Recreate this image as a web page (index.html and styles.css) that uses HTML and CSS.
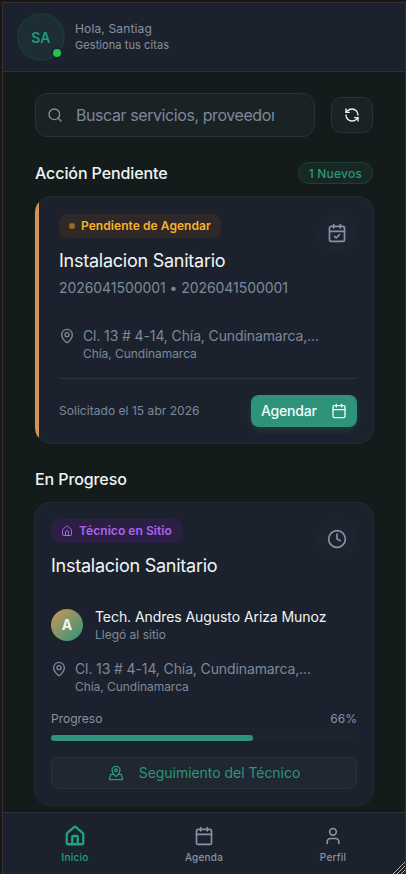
FILE: index.html
```html
<!DOCTYPE html>
<html lang="es">
<head>
<meta charset="utf-8">
<meta name="viewport" content="width=device-width, initial-scale=1">
<title>Inicio</title>
<link rel="stylesheet" href="styles.css">
</head>
<body>
<svg class="sprite" aria-hidden="true">
  <symbol id="pin" viewBox="0 0 24 24"><path d="M20 10c0 5-5.5 10.2-7.4 11.8a1 1 0 0 1-1.2 0C9.500 20.200 4 15 4 10a8 8 0 0 1 16 0"/><circle cx="12" cy="10" r="3"/></symbol>
  <symbol id="calendar" viewBox="0 0 24 24"><path d="M8 2v4M16 2v4M3 10h18"/><rect x="3" y="4" width="18" height="18" rx="2"/></symbol>
  <symbol id="house" viewBox="0 0 24 24"><path d="M15 21v-8a1 1 0 0 0-1-1h-4a1 1 0 0 0-1 1v8"/><path d="M3 10a2 2 0 0 1 .7-1.500l7-6a2 2 0 0 1 2.600 0l7 6A2 2 0 0 1 21 10v9a2 2 0 0 1-2 2H5a2 2 0 0 1-2-2z"/></symbol>
</svg>
<div class="app">
  <header class="header">
    <div class="avatar">SA<span class="online"></span></div>
    <div>
      <div class="hello">Hola, Santiag</div>
      <div class="tagline">Gestiona tus citas</div>
    </div>
  </header>

  <main class="content">
    <div class="search-row">
      <label class="search">
        <svg class="icon" viewBox="0 0 24 24"><circle cx="11" cy="11" r="8"/><path d="m21 21-4.300-4.300"/></svg>
        <span class="search-text">Buscar servicios, proveedores</span>
      </label>
      <button class="refresh" aria-label="Actualizar">
        <svg class="icon" viewBox="0 0 24 24"><path d="M21 12a9 9 0 0 0-9-9 9.750 9.750 0 0 0-6.740 2.740L3 8"/><path d="M3 3v5h5"/><path d="M3 12a9 9 0 0 0 9 9 9.750 9.750 0 0 0 6.740-2.740L21 16"/><path d="M16 16h5v5"/></svg>
      </button>
    </div>

    <div class="section-head">
      <h2>Acción Pendiente</h2>
      <span class="count">1 Nuevos</span>
    </div>

    <article class="card card-pending">
      <div class="card-top">
        <div>
          <span class="badge badge-pending"><i class="dot"></i>Pendiente de Agendar</span>
          <h3>Instalacion Sanitario</h3>
          <p class="ids">2026041500001 • 2026041500001</p>
        </div>
        <span class="round"><svg class="icon" viewBox="0 0 24 24"><use href="#calendar"/><path d="m9 16 2 2 4-4"/></svg></span>
      </div>
      <div class="place">
        <svg class="icon"><use href="#pin"/></svg>
        <div>
          <p class="address">Cl. 13 # 4-14, Chía, Cundinamarca,...</p>
          <p class="city">Chía, Cundinamarca</p>
        </div>
      </div>
      <footer class="card-foot">
        <span class="requested">Solicitado el 15 abr 2026</span>
        <button class="schedule">Agendar<svg class="icon"><use href="#calendar"/></svg></button>
      </footer>
    </article>

    <h2 class="progress-title">En Progreso</h2>

    <article class="card card-progress">
      <div class="card-top">
        <div>
          <span class="badge badge-site"><svg class="icon"><use href="#house"/></svg>Técnico en Sitio</span>
          <h3>Instalacion Sanitario</h3>
        </div>
        <span class="round"><svg class="icon" viewBox="0 0 24 24"><circle cx="12" cy="12" r="10"/><path d="M12 6v6l4 2"/></svg></span>
      </div>
      <div class="tech">
        <span class="tech-avatar">A</span>
        <div>
          <p class="tech-name">Tech. Andres Augusto Ariza Munoz</p>
          <p class="tech-state">Llegó al sitio</p>
        </div>
      </div>
      <div class="place">
        <svg class="icon"><use href="#pin"/></svg>
        <div>
          <p class="address">Cl. 13 # 4-14, Chía, Cundinamarca,...</p>
          <p class="city">Chía, Cundinamarca</p>
        </div>
      </div>
      <div class="progress-head"><span>Progreso</span><span class="percent">66%</span></div>
      <div class="bar"><div class="fill" style="width:66%"></div></div>
      <button class="track">
        <svg class="icon" viewBox="0 0 24 24"><path d="M18 8c0 3.613-3.869 7.429-5.393 8.795a1 1 0 0 1-1.214 0C9.870 15.429 6 11.613 6 8a6 6 0 0 1 12 0"/><circle cx="12" cy="8" r="2"/><path d="M8.714 14h-3.710a1 1 0 0 0-.948.683l-2.004 6A1 1 0 0 0 3 22h18a1 1 0 0 0 .948-1.316l-2-6a1 1 0 0 0-.949-.684h-3.712"/></svg>
        Seguimiento del Técnico
      </button>
    </article>
  </main>

  <nav class="nav">
    <a class="nav-item active"><svg class="icon"><use href="#house"/></svg>Inicio</a>
    <a class="nav-item"><svg class="icon"><use href="#calendar"/></svg>Agenda</a>
    <a class="nav-item"><svg class="icon" viewBox="0 0 24 24"><path d="M19 21v-2a4 4 0 0 0-4-4H9a4 4 0 0 0-4 4v2"/><circle cx="12" cy="7" r="4"/></svg>Perfil</a>
  </nav>
  <svg class="grip" viewBox="0 0 12 12"><path d="M0 12 12 0M4 12l8-8M8 12l4-4"/></svg>
</div>
</body>
</html>
```
FILE: styles.css
```css
* { box-sizing: border-box; }
body { margin: 0; background: #181818; font-family: Inter, sans-serif; color: #f0f5f3; }
h2, h3, p { margin: 0; }
button { font: inherit; padding: 0; }
.sprite { display: none; }
.icon { display: block; flex: none; fill: none; stroke: currentColor; stroke-width: 2; stroke-linecap: round; stroke-linejoin: round; }

.app {
  position: relative;
  display: flex;
  flex-direction: column;
  height: 872px;
  margin: 2px 0 0 2px;
  border: solid #353034;
  border-width: 1px 1px 0;
  background: #141c1b;
  overflow: hidden;
}

.header { flex: none; display: flex; align-items: center; gap: 10px; height: 69px; padding: 0 14px; background: #1c222d; border-bottom: 1px solid #2a323e; }
.avatar { position: relative; display: flex; align-items: center; justify-content: center; width: 48px; height: 48px; border: 2px solid #1b3538; border-radius: 50%; background: #1c2d34; color: #1e9c7c; font-size: 14px; font-weight: 600; letter-spacing: .1px; }
.online { position: absolute; right: 0; bottom: 0; width: 12px; height: 12px; border: 2px solid #1c222d; border-radius: 50%; background: #22c34f; }
.hello { font-size: 12px; line-height: 16px; letter-spacing: .15px; color: #8792a3; }
.tagline { font-size: 11px; line-height: 17px; letter-spacing: .08px; color: #8792a3; }

.content { flex: 1; padding: 21px 32px 0; min-height: 0; }
.search-row { display: flex; align-items: center; gap: 16px; }
.search { display: flex; align-items: center; flex: 1; height: 44px; padding: 0 40px 0 11px; border: 1px solid #273240; border-radius: 12px; background: #1b2224; }
.search .icon { width: 16px; height: 16px; color: #8792a3; }
.search-text { flex: 1; width: 0; margin-left: 13px; overflow: hidden; white-space: nowrap; font-size: 16px; line-height: 24px; letter-spacing: -.42px; color: #7d899a; }
.refresh { display: flex; align-items: center; justify-content: center; width: 42px; height: 36px; border: 1px solid #273240; border-radius: 10px; background: #1b2224; color: #f0f5f3; }
.refresh .icon { width: 16px; height: 16px; }

.section-head { display: flex; align-items: center; justify-content: space-between; height: 22px; margin: 25px 0 12px; }
h2 { font-size: 16px; line-height: 22px; font-weight: 500; letter-spacing: -.1px; }
.count { height: 22px; padding: 0 10px; border: 1px solid #1b4035; border-radius: 11px; background: #172824; color: #2d957b; font-size: 12px; line-height: 21px; font-weight: 500; letter-spacing: .2px; }

.card { border: 1px solid #232b2d; border-radius: 16px; background: #1c222d; overflow: hidden; margin-right: -1px; }
.card-top { display: flex; justify-content: space-between; }
.card-pending { height: 248px; padding: 17px 16px 0 24px; border-left: 0; background: linear-gradient(90deg, #d19655 4px, #1c222d 4px); }
.badge { display: flex; align-items: center; width: max-content; height: 24px; padding: 0 10px 1px; gap: 6px; border-radius: 8px; font-size: 12px; font-weight: 600; letter-spacing: .06px; }
.badge-pending { background: #302727; color: #f5b32c; }
.dot { width: 6px; height: 6px; margin-top: 1px; border-radius: 50%; background: #966b27; }
h3 { margin-top: 11px; font-size: 18px; line-height: 24px; font-weight: 400; letter-spacing: -.25px; }
.ids { margin-top: 5px; font-size: 14px; line-height: 20px; letter-spacing: -.06px; color: #7d899a; }
.round { display: flex; align-items: center; justify-content: center; width: 40px; height: 40px; margin-top: -1px; border-radius: 50%; background: #1d2430; color: #8792a3; }
.round .icon { width: 20px; height: 20px; }
.place { display: flex; gap: 8px; margin-top: 28px; color: #7d899a; }
.place .icon { width: 16px; height: 16px; margin-top: 2px; }
.address { font-size: 14px; line-height: 20px; letter-spacing: -.12px; }
.city { font-size: 12px; line-height: 15px; letter-spacing: -.05px; }
.card-foot { display: flex; align-items: center; justify-content: space-between; margin-top: 17px; padding-top: 16px; border-top: 1px solid #2c333e; }
.requested { padding-bottom: 2px; font-size: 12px; letter-spacing: .04px; color: #7d899a; }
.schedule { display: flex; align-items: center; justify-content: space-between; width: 106px; height: 32px; padding: 0 10px 1px; border: 0; border-radius: 8px; background: #2d947b; color: #f5faf8; font-size: 14px; font-weight: 500; letter-spacing: -.2px; box-shadow: 0 3px 6px rgba(45, 148, 123, .22); }
.schedule .icon { width: 16px; height: 16px; margin-top: 1px; }

.progress-title { margin: 24px 0 12px; }
.card-progress { height: 304px; margin-left: -1px; padding: 16px; }
.badge-site { background: #2b2044; color: #af62ef; }
.badge-site .icon { width: 12px; height: 12px; margin-top: 1px; }
.card-progress .round { margin-top: 0; }
.card-progress h3 { margin-top: 11px; }
.tech { display: flex; align-items: center; gap: 12px; margin-top: 29px; }
.tech-avatar { display: flex; align-items: center; justify-content: center; width: 32px; height: 32px; margin-top: 1px; padding-bottom: 1px; border-radius: 50%; background: linear-gradient(135deg, #d19655, #2d947b); font-size: 14px; font-weight: 700; }
.tech-name { font-size: 14px; line-height: 20px; font-weight: 400; letter-spacing: -.07px; }
.tech-state { font-size: 12px; line-height: 15px; color: #7d899a; }
.card-progress .place { margin-top: 17px; }
.progress-head { display: flex; justify-content: space-between; margin-top: 17px; font-size: 12px; line-height: 16px; color: #8792a3; }
.bar { height: 6px; margin-top: 8px; border-radius: 3px; background: #1c252e; }
.fill { height: 6px; border-radius: 3px; background: #2d947b; }
.track { display: flex; align-items: center; justify-content: center; gap: 15px; width: 100%; height: 32px; padding-bottom: 1px; margin-top: 16px; border: 1px solid #2a323c; border-radius: 8px; background: #202732; color: #2d957b; font-size: 14px; font-weight: 400; letter-spacing: -.04px; }
.track .icon { width: 16px; height: 16px; }

.nav { position: relative; flex: none; display: grid; grid-template-columns: repeat(3, 129px); justify-content: center; height: 62px; border-top: 1px solid #2a323e; background: #1c222d; }
.nav-item { display: flex; flex-direction: column; align-items: center; padding-top: 13px; gap: 5px; color: #8792a3; font-size: 10px; line-height: 12px; font-weight: 500; letter-spacing: .2px; }
.nav-item .icon { width: 20px; height: 20px; }
.active { color: #1fa47e; }
.active .icon { width: 22px; height: 22px; margin: -1px 0; stroke-width: 2.5; }
.grip { position: absolute; right: 0; bottom: 0; width: 12px; height: 12px; fill: none; stroke: #b5b5b5; stroke-width: 1; }
```
